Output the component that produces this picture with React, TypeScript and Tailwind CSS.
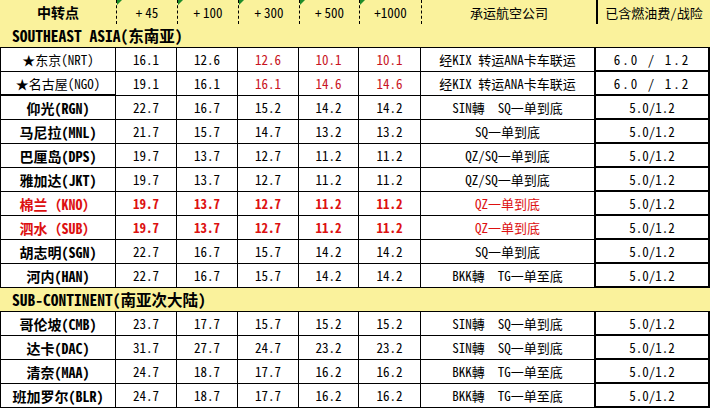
import React from "react";

type Row = {
  name: string;
  vals: string[];
  carrier: string;
  fee: string;
  bold?: boolean;
  red?: boolean;
  redFrom?: number;
  thickBottom?: boolean;
};

type Section = { title: string; rows: Row[] };

const WIDTHS = ["w-[116px]", "w-[61px]", "w-[61px]", "w-[61px]", "w-[60px]", "w-[62px]", "w-[175px]", "w-[114px]"];

const SECTIONS: Section[] = [
  {
    title: "SOUTHEAST ASIA(东南亚)",
    rows: [
      { name: "★东京(NRT)", vals: ["16.1", "12.6", "12.6", "10.1", "10.1"], redFrom: 2, carrier: "经KIX 转运ANA卡车联运", fee: "6.0 / 1.2" },
      { name: "★名古屋(NGO)", vals: ["19.1", "16.1", "16.1", "14.6", "14.6"], redFrom: 2, carrier: "经KIX 转运ANA卡车联运", fee: "6.0 / 1.2", thickBottom: true },
      { name: "仰光(RGN)", bold: true, vals: ["22.7", "16.7", "15.2", "14.2", "14.2"], carrier: "SIN轉　SQ一单到底", fee: "5.0/1.2" },
      { name: "马尼拉(MNL)", bold: true, vals: ["21.7", "15.7", "14.7", "13.2", "13.2"], carrier: "SQ一单到底", fee: "5.0/1.2" },
      { name: "巴厘岛(DPS)", bold: true, vals: ["19.7", "13.7", "12.7", "11.2", "11.2"], carrier: "QZ/SQ一单到底", fee: "5.0/1.2" },
      { name: "雅加达(JKT)", bold: true, vals: ["19.7", "13.7", "12.7", "11.2", "11.2"], carrier: "QZ/SQ一单到底", fee: "5.0/1.2" },
      { name: "棉兰（KNO）", bold: true, red: true, vals: ["19.7", "13.7", "12.7", "11.2", "11.2"], carrier: "QZ一单到底", fee: "5.0/1.2" },
      { name: "泗水（SUB）", bold: true, red: true, vals: ["19.7", "13.7", "12.7", "11.2", "11.2"], carrier: "QZ一单到底", fee: "5.0/1.2" },
      { name: "胡志明(SGN)", bold: true, vals: ["22.7", "16.7", "15.7", "14.2", "14.2"], carrier: "SQ一单到底", fee: "5.0/1.2" },
      { name: "河内(HAN)", bold: true, vals: ["22.7", "16.7", "15.7", "14.2", "14.2"], carrier: "BKK轉　TG一单至底", fee: "5.0/1.2" },
    ],
  },
  {
    title: "SUB-CONTINENT(南亚次大陆)",
    rows: [
      { name: "哥伦坡(CMB)", bold: true, vals: ["23.7", "17.7", "15.7", "15.2", "15.2"], carrier: "SIN轉　SQ一单到底", fee: "5.0/1.2" },
      { name: "达卡(DAC)", bold: true, vals: ["31.7", "27.7", "24.7", "23.2", "23.2"], carrier: "SIN轉　SQ一单到底", fee: "5.0/1.2" },
      { name: "清奈(MAA)", bold: true, vals: ["24.7", "18.7", "17.7", "16.2", "16.2"], carrier: "BKK轉　TG一单至底", fee: "5.0/1.2" },
      { name: "班加罗尔(BLR)", bold: true, vals: ["24.7", "18.7", "17.7", "16.2", "16.2"], carrier: "BKK轉　TG一单至底", fee: "5.0/1.2" },
    ],
  },
];

const HEAD_NUMS = ["+45", "+100", "+300", "+500", "+1000"];

function Corner() {
  return (
    <span className="absolute left-0 top-0 h-0 w-0 border-r-[5px] border-t-[5px] border-r-transparent border-t-[#1e8c2a]" />
  );
}

function HeaderRow() {
  return (
    <div className="flex h-[24px] bg-[#faf29c] text-[13px] text-black">
      <div className={`${WIDTHS[0]} flex items-center justify-center text-[14px] font-bold`}>中转点</div>
      {HEAD_NUMS.map((h, i) => (
        <div
          key={h}
          className={`${WIDTHS[i + 1]} relative flex items-center justify-center border-l border-dashed border-black`}
        >
          <Corner />
          {h === "+1000" ? (
            h
          ) : (
            <>
              <span className="mr-[3px]">+</span>
              {h.slice(1)}
            </>
          )}
        </div>
      ))}
      <div className={`${WIDTHS[6]} flex items-center justify-center border-l border-dashed border-black`}>承运航空公司</div>
      <div className={`${WIDTHS[7]} flex items-center justify-center border-l-2 border-black`}>已含燃油费/战险</div>
    </div>
  );
}

function SectionRow({ title }: { title: string }) {
  return (
    <div className="flex h-[24px] items-center border-b border-black bg-[#faf29c] pl-[12px] text-[15.5px] font-bold text-black">
      {title}
    </div>
  );
}

function DataRow({ row }: { row: Row }) {
  const red = row.red ? "text-[#dd1111]" : "text-black";
  return (
    <div className="flex h-[24px] text-[13px]">
      <div
        className={`${WIDTHS[0]} flex items-center justify-center border-l border-r border-black ${
          row.thickBottom ? "border-b-2" : "border-b"
        } ${row.bold ? "text-[14px] font-bold" : ""} ${red}`}
      >
        {row.name}
      </div>
      {row.vals.map((v, i) => {
        const isRed = row.red || (row.redFrom !== undefined && i >= row.redFrom);
        return (
          <div
            key={i}
            className={`${WIDTHS[i + 1]} flex items-center justify-center border-b border-r border-black ${
              isRed ? (row.red ? "font-bold text-[#dd1111]" : "text-[#c8141e]") : "text-black"
            }`}
          >
            {v}
          </div>
        );
      })}
      <div
        className={`${WIDTHS[6]} flex items-center justify-center whitespace-pre border-b border-r-2 border-black ${
          row.red ? "text-[#dd1111]" : "text-black"
        }`}
      >
        {row.carrier}
      </div>
      <div
        className={`${WIDTHS[7]} flex items-center justify-center whitespace-pre border-b-2 border-r-2 border-black text-black ${
          row.fee.includes(" ") ? "tracking-[2px]" : ""
        }`}
      >
        {row.fee}
      </div>
    </div>
  );
}

export default function App() {
  return (
    <div className="h-[409px] w-[710px] overflow-hidden bg-white font-['Noto_Sans_Mono_CJK_SC','Liberation_Mono','Noto_Sans_CJK_SC',monospace] leading-none">
      <HeaderRow />
      {SECTIONS.map((s) => (
        <div key={s.title}>
          <SectionRow title={s.title} />
          {s.rows.map((r) => (
            <DataRow key={r.name} row={r} />
          ))}
        </div>
      ))}
    </div>
  );
}
